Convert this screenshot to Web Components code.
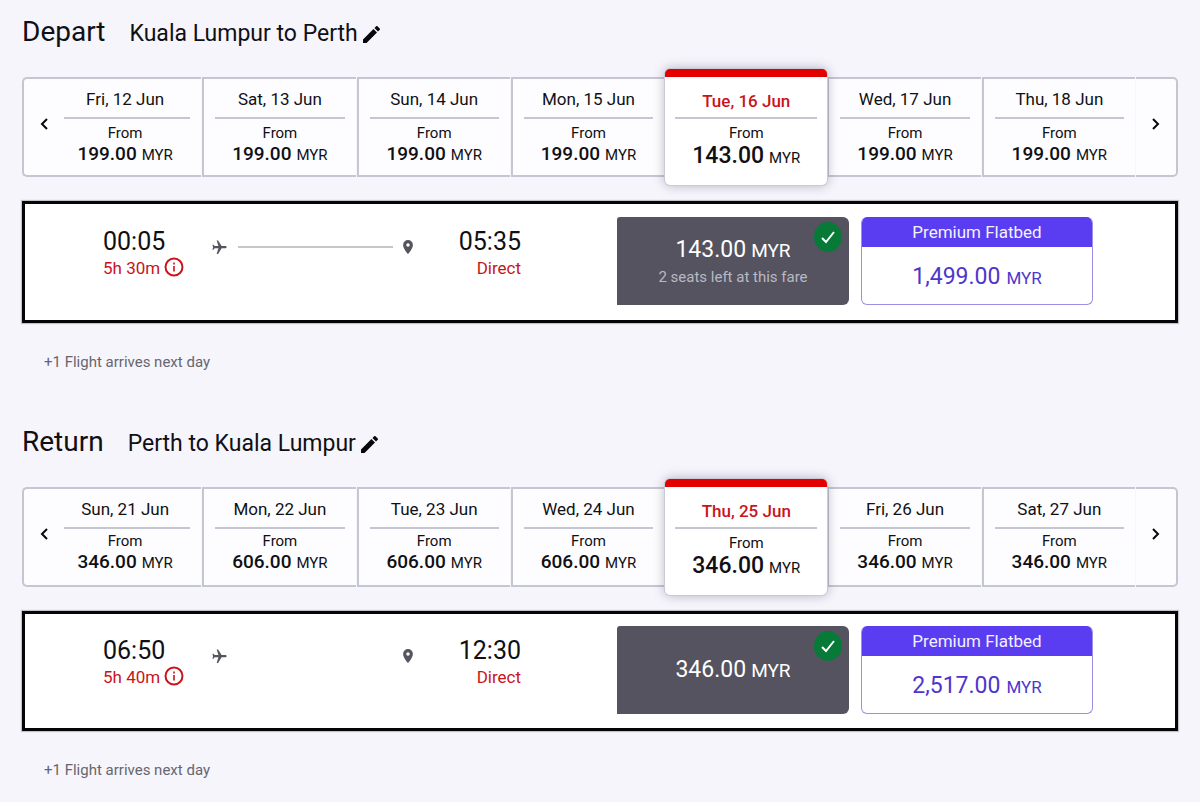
<!DOCTYPE html>
<html lang="en">
<head>
<meta charset="utf-8">
<meta name="viewport" content="width=device-width, initial-scale=1">
<title>Select your flights</title>
<style>
  body {
    margin: 0;
    background: #f6f5fc;
    color: #101014;
    font-family: Roboto, "Liberation Sans", sans-serif;
    --line: #c4c6d1;
    --brand: #e30000;
    --danger: #c8141a;
    --violet: #5a3df0;
  }
  main { padding: 0 22px; }
</style>
</head>
<body>
<main>
  <flight-leg>
    <span slot="title">Depart</span>
    <span slot="route">Kuala Lumpur to Perth</span>
    <date-strip slot="dates">
      <date-option first date="Fri, 12 Jun" price="199.00"></date-option>
      <date-option date="Sat, 13 Jun" price="199.00"></date-option>
      <date-option date="Sun, 14 Jun" price="199.00"></date-option>
      <date-option date="Mon, 15 Jun" price="199.00"></date-option>
      <date-option selected date="Tue, 16 Jun" price="143.00"></date-option>
      <date-option date="Wed, 17 Jun" price="199.00"></date-option>
      <date-option date="Thu, 18 Jun" price="199.00"></date-option>
    </date-strip>
    <flight-card slot="flight" line departs="00:05" duration="5h 30m" arrives="05:35" stops="Direct">
      <fare-option selected price="143.00">2 seats left at this fare</fare-option>
      <fare-option premium label="Premium Flatbed" price="1,499.00"></fare-option>
    </flight-card>
    <span slot="note">+1 Flight arrives next day</span>
  </flight-leg>

  <flight-leg compact>
    <span slot="title">Return</span>
    <span slot="route">Perth to Kuala Lumpur</span>
    <date-strip slot="dates">
      <date-option first date="Sun, 21 Jun" price="346.00"></date-option>
      <date-option date="Mon, 22 Jun" price="606.00"></date-option>
      <date-option date="Tue, 23 Jun" price="606.00"></date-option>
      <date-option date="Wed, 24 Jun" price="606.00"></date-option>
      <date-option selected date="Thu, 25 Jun" price="346.00"></date-option>
      <date-option date="Fri, 26 Jun" price="346.00"></date-option>
      <date-option date="Sat, 27 Jun" price="346.00"></date-option>
    </date-strip>
    <flight-card slot="flight" departs="06:50" duration="5h 40m" arrives="12:30" stops="Direct">
      <fare-option selected price="346.00"></fare-option>
      <fare-option premium label="Premium Flatbed" price="2,517.00"></fare-option>
    </flight-card>
    <span slot="note">+1 Flight arrives next day</span>
  </flight-leg>
</main>

<script>
const RESET = `
  * { box-sizing: border-box; }
  button { margin: 0; padding: 0; border: 0; background: none; color: inherit; font: inherit; cursor: pointer; }
  svg { display: block; }
`;

class BaseElement extends HTMLElement {
  connectedCallback() {
    if (this.shadowRoot) return;
    this.attachShadow({ mode: "open" }).innerHTML = `<style>${RESET}</style>` + this.render();
  }
  attr(name) { return this.getAttribute(name) || ""; }
}

class FlightLeg extends BaseElement {
  render() {
    return `
    <style>
      :host { display: block; padding-bottom: 38px; --card-pad: 13px 82px 15px 78px; --from-gap: 4px; }
      :host([compact]) { --card-pad: 12px 82px 14px 78px; --from-gap: 2px; }
      header { display: flex; align-items: baseline; gap: 24px; padding-top: 14px; height: 77px; }
      h2 { margin: 0; font-size: 28px; font-weight: 400; line-height: 36px; }
      .route { display: flex; align-items: center; gap: 5px; font-size: 23px; line-height: 36px; }
      .flight { margin-top: 24px; }
      p { margin: 0; padding: 29px 22px 0; font-size: 15px; line-height: 20px; color: #66666e; }
    </style>
    <section>
      <header>
        <h2><slot name="title"></slot></h2>
        <div class="route"><slot name="route"></slot>
          <button aria-label="Edit route"><svg width="17" height="17" viewBox="3 3 18 18"><path fill="#08080c" d="M3 17.25V21h3.75L17.81 9.94l-3.75-3.75L3 17.25zM20.71 7.04a1 1 0 0 0 0-1.41l-2.34-2.34a1 1 0 0 0-1.41 0l-1.83 1.83 3.75 3.75 1.83-1.83z"/></svg></button>
        </div>
      </header>
      <slot name="dates"></slot>
      <div class="flight"><slot name="flight"></slot></div>
      <p><slot name="note"></slot></p>
    </section>`;
  }
}

class DateStrip extends BaseElement {
  render() {
    return `
    <style>
      :host { display: flex; height: 100px; }
      .nav { flex: 0 0 42px; display: grid; place-items: center; padding-bottom: 6px; background: #fdfdff; border: 2px solid var(--line); }
      .prev { border-right: 0; border-radius: 5px 0 0 5px; }
      .next { border-left: 0; border-radius: 0 5px 5px 0; }
    </style>
    <button class="nav prev" aria-label="Earlier dates"><svg width="8" height="12" viewBox="0 0 8 12"><path d="M7 1 2 6l5 5" fill="none" stroke="#08080c" stroke-width="2"/></svg></button>
    <slot></slot>
    <button class="nav next" aria-label="Later dates"><svg width="8" height="12" viewBox="0 0 8 12"><path d="m1 1 5 5-5 5" fill="none" stroke="#08080c" stroke-width="2"/></svg></button>`;
  }
}

class DateOption extends BaseElement {
  render() {
    return `
    <style>
      :host { display: flex; flex: 154 1 0; min-width: 0; }
      :host([first]) { flex-grow: 138; }
      :host([selected]) { flex-grow: 162; margin: -8px 0; z-index: 1; position: relative; }
      button {
        flex: 1; display: flex; flex-direction: column; justify-content: flex-start; margin-right: 1px; padding: 10px 11px 0;
        background: #fdfdff; border: 2px solid var(--line); border-right: 0; text-align: center; white-space: nowrap;
      }
      .date { padding-bottom: 8px; border-bottom: 2px solid var(--line); font-size: 17px; line-height: 20px; }
      .from { margin-top: var(--from-gap); font-size: 15px; line-height: 20px; }
      .price { display: flex; justify-content: center; align-items: baseline; gap: 5px; font-size: 15px; line-height: 22px; }
      b { font-size: 19px; font-weight: 500; }
      :host([first]) button { border-left: 0; padding-left: 0; }
      :host([first]) .from, :host([first]) .price, :host([first]) .date span { padding-right: 4px; }
      :host([selected]) button {
        margin: 0; padding: 14px 10px 0; background: #fff; border: 0; border-top: 8px solid var(--brand); border-radius: 5px;
        box-shadow: 0 0 0 1px #c9cad5, 0 0 12px rgba(60, 60, 90, .4);
      }
      :host([selected]) .date { padding-bottom: 6px; color: var(--danger); font-weight: 500; }
      :host([selected]) .from { margin-top: 4px; }
      :host([selected]) .price { line-height: 26px; }
      :host([selected]) b { font-size: 23px; }
    </style>
    <button aria-pressed="${this.hasAttribute("selected")}">
      <span class="date"><span>${this.attr("date")}</span></span>
      <span class="from">From</span>
      <span class="price"><b>${this.attr("price")}</b> <span>MYR</span></span>
    </button>`;
  }
}

class FlightCard extends BaseElement {
  render() {
    return `
    <style>
      :host {
        display: flex; align-items: flex-start; padding: var(--card-pad);
        background: #fff; border: 3px solid #050507; box-shadow: 0 0 1px 1px rgba(0, 0, 0, .2);
      }
      .trip { flex: 418 1 0; display: flex; padding-top: 9px; }
      .end { flex: 0 0 108px; }
      .arrive { text-align: right; }
      .time { font-size: 25px; line-height: 32px; }
      .meta { display: flex; align-items: center; gap: 4px; color: var(--danger); font-size: 17px; line-height: 20px; }
      .arrive .meta { justify-content: flex-end; }
      .meta button { margin-top: -3px; }
      .track { flex: 1; display: flex; align-items: center; gap: 10px; height: 42px; }
      .track i { flex: 1; height: 2px; }
      :host([line]) .track i { background: #c6c6cb; }
      .fares { flex: 476 1 0; display: flex; gap: 12px; margin-left: 96px; }
    </style>
    <div class="trip">
      <div class="end">
        <div class="time">${this.attr("departs")}</div>
        <div class="meta"><span>${this.attr("duration")}</span>
          <button aria-label="Flight details"><svg width="20" height="20" viewBox="0 0 20 20"><circle cx="10" cy="10" r="8.500" fill="none" stroke="#c8141a" stroke-width="2"/><path d="M9.200 9h1.600v5.500H9.200zM9.200 5.500h1.600v2H9.200z" fill="#c8141a"/></svg></button>
        </div>
      </div>
      <div class="track">
        <svg width="17" height="17" viewBox="0 0 24 24"><path transform="rotate(90 12 12)" fill="#55555e" d="M21 16v-2l-8-5V3.500a1.500 1.500 0 0 0-3 0V9l-8 5v2l8-2.500V19l-2 1.500V22l3.500-1 3.500 1v-1.500L13 19v-5.500l8 2.500z"/></svg>
        <i></i>
        <svg width="10" height="14" viewBox="5 2 14 20"><path fill="#55555e" d="M12 2a7 7 0 0 0-7 7c0 5.250 7 13 7 13s7-7.750 7-13a7 7 0 0 0-7-7zm0 9.500a2.500 2.500 0 1 1 0-5 2.500 2.500 0 0 1 0 5z"/></svg>
      </div>
      <div class="end arrive">
        <div class="time">${this.attr("arrives")}</div>
        <div class="meta"><span>${this.attr("stops")}</span></div>
      </div>
    </div>
    <div class="fares"><slot></slot></div>`;
  }
}

class FareOption extends BaseElement {
  render() {
    const premium = this.hasAttribute("premium");
    return `
    <style>
      :host { display: flex; flex: 1 1 0; min-width: 0; position: relative; }
      button { flex: 1; display: flex; flex-direction: column; min-height: 88px; border-radius: 6px; text-align: center; }
      .body { flex: 1; display: flex; flex-direction: column; justify-content: center; }
      .price { display: flex; justify-content: center; align-items: baseline; gap: 5px; font-size: 19px; line-height: 28px; }
      b { font-size: 23px; font-weight: 400; }
      .note { font-size: 15px; line-height: 20px; padding-top: 2px; color: #b9b9c4; }
      :host([selected]) button { background: #54535f; color: #fff; border-radius: 3px 6px 6px 0; }
      :host([premium]) button { border: 1px solid #9d90e4; border-top: 0; color: #4e36cc; overflow: hidden; }
      .label { margin: 0 -1px; background: var(--violet); color: #f3f1ff; font-size: 17px; line-height: 30px; }
      :host([premium]) .body { padding-top: 3px; }
      :host([premium]) .price { gap: 6px; font-size: 17px; }
      .badge { position: absolute; top: 5px; right: 7px; }
    </style>
    <button aria-pressed="${this.hasAttribute("selected")}">
      ${premium ? `<span class="label">${this.attr("label")}</span>` : ""}
      <span class="body">
        <span class="price"><b>${this.attr("price")}</b> <span>MYR</span></span>
        ${this.textContent.trim() ? `<span class="note"><slot></slot></span>` : ""}
      </span>
    </button>
    ${this.hasAttribute("selected") ? `<svg class="badge" width="28" height="30" viewBox="0 0 28 30"><ellipse cx="14" cy="15" rx="14" ry="15" fill="#067a36"/><path d="m8 16 4 4 8-10" fill="none" stroke="#fff" stroke-width="2"/></svg>` : ""}`;
  }
}

customElements.define("flight-leg", FlightLeg);
customElements.define("date-strip", DateStrip);
customElements.define("date-option", DateOption);
customElements.define("flight-card", FlightCard);
customElements.define("fare-option", FareOption);
</script>
</body>
</html>
